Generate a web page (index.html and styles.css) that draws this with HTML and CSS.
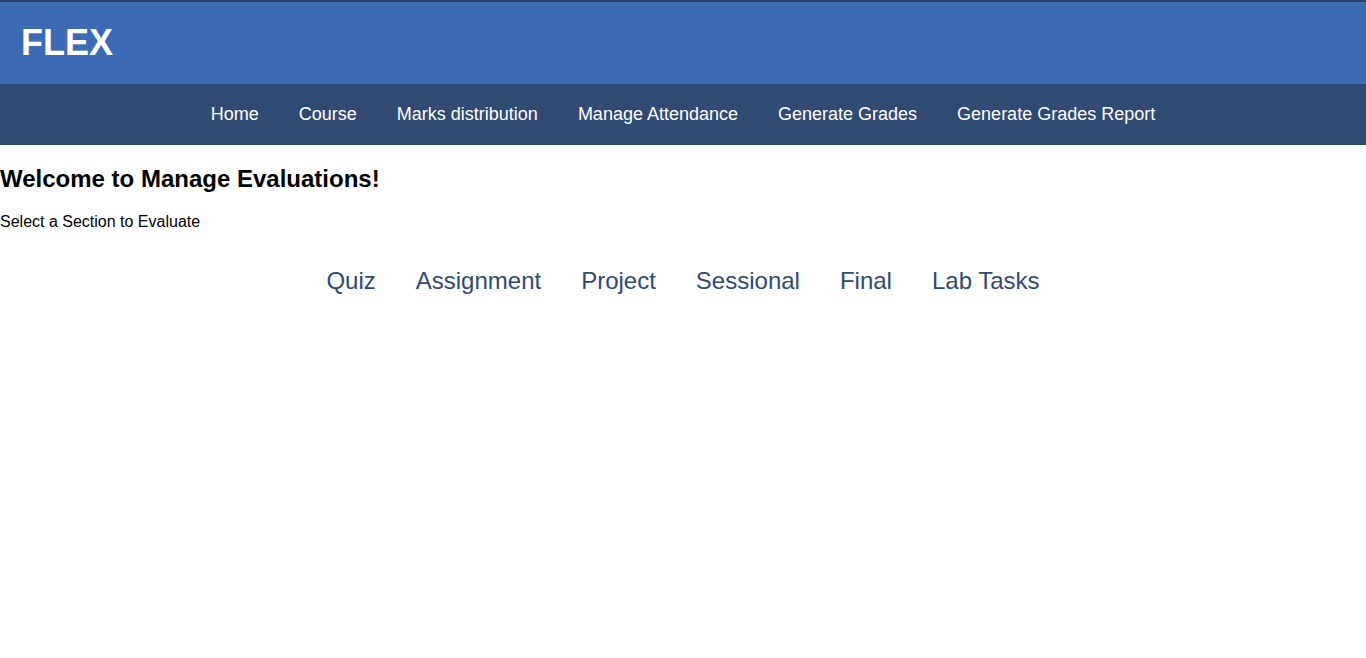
FILE: index.html
```html
<!DOCTYPE html>
<html>
<head>
<meta charset="utf-8">
<link rel="stylesheet" href="styles.css">
</head>
<body>
<header class="topbar">
  <div class="brand">FLEX</div>
</header>
<nav class="mainnav">
  <a href="#">Home</a>
  <a href="#">Course</a>
  <a href="#">Marks distribution</a>
  <a href="#">Manage Attendance</a>
  <a href="#">Generate Grades</a>
  <a href="#">Generate Grades Report</a>
</nav>
<main class="content">
  <h2 class="title">Welcome to Manage Evaluations!</h2>
  <p class="subtitle">Select a Section to Evaluate</p>
  <div class="tabs">
    <a href="#">Quiz</a>
    <a href="#">Assignment</a>
    <a href="#">Project</a>
    <a href="#">Sessional</a>
    <a href="#">Final</a>
    <a href="#">Lab Tasks</a>
  </div>
</main>
</body>
</html>
```
FILE: styles.css
```css
* { box-sizing: border-box; }
body {
  margin: 0;
  font-family: "Liberation Sans", Arial, sans-serif;
  background: #ffffff;
  color: #000;
}
.topbar {
  background: #3b6bb5;
  border-top: 2px solid #2b3f60;
  height: 84px;
  display: flex;
  align-items: center;
  padding: 0 21px;
}
.brand {
  color: #fff;
  font-size: 36px;
  font-weight: bold;
}
.mainnav {
  background: #304a74;
  height: 61px;
  display: flex;
  justify-content: center;
  align-items: center;
}
.mainnav a {
  color: #fff;
  text-decoration: none;
  font-size: 18px;
  padding: 0 20px;
}
.content { padding: 0; }
.title {
  font-size: 24px;
  font-weight: bold;
  margin: 20px 0;
}
.subtitle {
  font-size: 16px;
  margin: 16px 0;
}
.tabs {
  display: flex;
  justify-content: center;
  padding: 20px 0;
}
.tabs a {
  color: #304a74;
  text-decoration: none;
  font-size: 24px;
  padding: 0 20px;
}
```
